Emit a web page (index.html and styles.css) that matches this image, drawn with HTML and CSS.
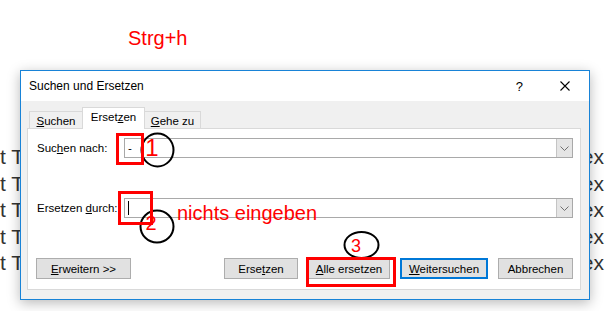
FILE: index.html
```html
<!DOCTYPE html>
<html lang="de">
<head>
  <meta charset="UTF-8" />
  <title>Suchen und Ersetzen</title>
  <link rel="stylesheet" href="styles.css">
</head>
<body>
  <div class="page">
    <div class="hotkey">Strg+h</div>

    <div class="doc">
      <div class="doc-line"><span>t T</span><span>ex</span></div>
      <div class="doc-line"><span>t T</span><span>ex</span></div>
      <div class="doc-line"><span>t T</span><span>ex</span></div>
      <div class="doc-line"><span>t T</span><span>ex</span></div>
      <div class="doc-line"><span>t T</span><span>ex</span></div>
    </div>

    <div class="dialog">
      <div class="titlebar">
        <span class="title">Suchen und Ersetzen</span>
        <span class="help">?</span>
        <svg class="close" width="10" height="10" viewBox="0 0 10 10">
          <path d="M0.5 0.5 L9.5 9.5 M9.5 0.5 L0.5 9.5" stroke="#000" stroke-width="1.1" fill="none"/>
        </svg>
      </div>

      <div class="dialog-body">
        <div class="tabs">
          <div class="tab tab-1"><u>S</u>uchen</div>
          <div class="tab tab-2 active">Erset<u>z</u>en</div>
          <div class="tab tab-3"><u>G</u>ehe zu</div>
        </div>

        <div class="panel">
          <div class="row">
            <label>Suc<u>h</u>en nach:</label>
            <div class="field">
              <span class="value">-</span>
              <span class="drop"><svg width="9" height="5" viewBox="0 0 9 5"><path d="M0.5 0.5 L4.5 4.5 L8.5 0.5" stroke="#707070" fill="none"/></svg></span>
            </div>
          </div>

          <div class="row row-2">
            <label>Ersetzen <u>d</u>urch:</label>
            <div class="field">
              <span class="caret"></span>
              <span class="drop"><svg width="9" height="5" viewBox="0 0 9 5"><path d="M0.5 0.5 L4.5 4.5 L8.5 0.5" stroke="#707070" fill="none"/></svg></span>
            </div>
          </div>

          <div class="buttons">
            <button class="btn btn-more"><u>E</u>rweitern &gt;&gt;</button>
            <button class="btn btn-replace">Erse<u>t</u>zen</button>
            <button class="btn btn-all"><u>A</u>lle ersetzen</button>
            <button class="btn btn-next default"><u>W</u>eitersuchen</button>
            <button class="btn btn-cancel">Abbrechen</button>
          </div>
        </div>
      </div>
    </div>

    <svg class="marks" width="605" height="311" viewBox="0 0 605 311">
      <ellipse cx="157.5" cy="150" rx="16" ry="16.5" stroke="#000" stroke-width="2" fill="none"/>
      <ellipse cx="157" cy="226.5" rx="16.5" ry="16" stroke="#000" stroke-width="2" fill="none"/>
      <ellipse cx="361.5" cy="245" rx="17" ry="13" stroke="#000" stroke-width="2" fill="none"/>
      <text x="152" y="156" class="num num-1">1</text>
      <text x="151" y="230" class="num num-2">2</text>
      <text x="356" y="252" class="num num-3">3</text>
      <rect x="117.5" y="134.5" width="25" height="29" stroke="#ff0000" stroke-width="3" fill="none"/>
      <rect x="119.5" y="192.5" width="32" height="31" stroke="#ff0000" stroke-width="3" fill="none"/>
      <rect x="307.5" y="258.5" width="87" height="27" stroke="#ff0000" stroke-width="3" fill="none"/>
    </svg>

    <div class="note">nichts eingeben</div>
  </div>
</body>
</html>
```

FILE: styles.css
```css
* {
  box-sizing: border-box;
}

body {
  margin: 0;
  background: #ffffff;
  font-family: 'Liberation Sans', Arial, sans-serif;
}

.page {
  position: relative;
  width: 605px;
  height: 311px;
  overflow: hidden;
}

.hotkey {
  margin-top: 26px;
  padding-left: 128px;
  font-size: 20px;
  line-height: 24px;
  color: #ff0000;
}

.doc {
  margin-top: 94px;
  font-size: 21px;
  line-height: 26.5px;
  color: #333333;
}

.doc-line {
  display: flex;
  justify-content: space-between;
  padding-right: 1px;
}

/* dialog lies over the document */
.dialog {
  position: absolute;
  left: 20px;
  top: 70px;
  width: 570px;
  height: 230px;
  border: 1px solid #1883d7;
  background: #f0f0f0;
  display: flex;
  flex-direction: column;
  box-shadow: 0 3px 12px rgba(0, 0, 0, 0.28);
  font-size: 11.5px;
  color: #000;
}

.titlebar {
  height: 30px;
  background: #ffffff;
  display: flex;
  align-items: center;
  padding: 0 19px 0 8px;
  font-size: 12px;
}

.title {
  flex: 1;
}

.help {
  font-size: 13px;
  margin-right: 37px;
}

.dialog-body {
  flex: 1;
  display: flex;
  flex-direction: column;
  padding: 7px 8px 9px 6px;
}

.tabs {
  display: flex;
  align-items: flex-end;
  height: 21px;
  padding-left: 2px;
  margin-bottom: -1px;
  position: relative;
  z-index: 1;
}

.tab {
  height: 18px;
  border: 1px solid #d9d9d9;
  border-bottom: none;
  text-align: center;
  line-height: 18px;
}

.tab-1 { width: 53px; border-right: none; }
.tab-2 { width: 63px; }
.tab-3 { width: 56px; border-left: none; }

.tab.active {
  height: 22px;
  background: #ffffff;
  line-height: 19px;
}

.panel {
  flex: 1;
  background: #ffffff;
  border: 1px solid #d9d9d9;
  padding: 9px 7px 8px 9px;
  display: flex;
  flex-direction: column;
}

.row {
  display: grid;
  grid-template-columns: 87px 1fr;
  align-items: center;
  height: 20px;
}

.row-2 {
  margin-top: 40px;
}

.field {
  height: 20px;
  border: 1px solid #a9a9a9;
  display: flex;
  align-items: center;
  padding-left: 3px;
}

.value {
  flex: 1;
}

.caret {
  width: 1px;
  height: 14px;
  background: #000;
  margin-right: auto;
}

.drop {
  width: 16px;
  height: 18px;
  background: #e5e5e5;
  border-left: 1px solid #c4c4c4;
  display: flex;
  align-items: center;
  justify-content: center;
}

.buttons {
  display: flex;
  gap: 10px;
  margin-top: 40px;
  margin-left: -1px;
}

.btn {
  height: 21px;
  padding: 0;
  border: 1px solid #adadad;
  background: #e1e1e1;
  font-family: inherit;
  font-size: 11.5px;
  color: #000;
}

.btn-more { width: 95px; }
.btn-replace { width: 74px; margin-left: auto; }
.btn-all { width: 82px; }
.btn-next { width: 88px; }
.btn-cancel { width: 75px; }

.btn.default {
  border: 2px solid #0078d7;
}

/* annotations drawn on top of the screenshot */
.marks {
  position: absolute;
  left: 0;
  top: 0;
}

.num {
  font-family: 'Liberation Sans', Arial, sans-serif;
  fill: #ff0000;
  text-anchor: middle;
}

.num-1 { font-size: 24px; }
.num-2 { font-size: 20px; }
.num-3 { font-size: 18px; }

.note {
  position: absolute;
  left: 177px;
  top: 202px;
  font-size: 20px;
  line-height: 23px;
  color: #ff0000;
}
```
